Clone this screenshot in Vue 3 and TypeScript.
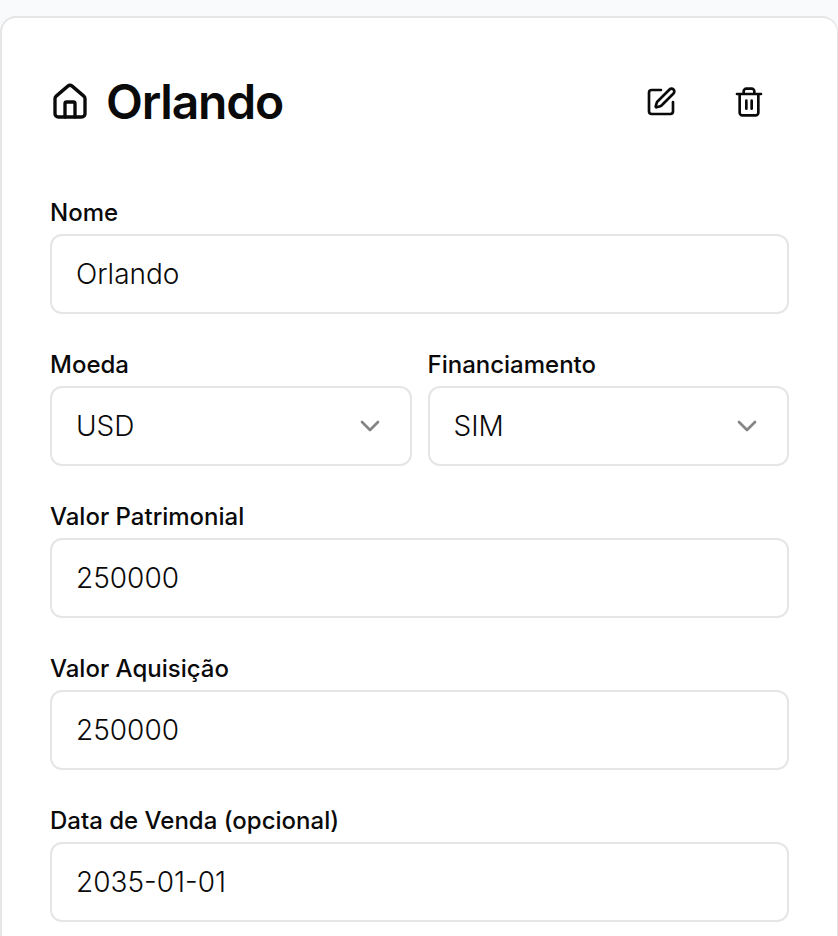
<script setup lang="ts">
import { reactive } from 'vue'

const asset = reactive({
  name: 'Orlando',
  currency: 'USD',
  financing: 'SIM',
  value: '250000',
  cost: '250000',
  saleDate: '2035-01-01',
})
</script>

<template>
  <main class="page">
    <section class="card">
      <header class="head">
        <h1 class="title">
          <svg class="house" viewBox="0 0 24 24" aria-hidden="true">
            <path d="M15 21v-8a1 1 0 0 0-1-1h-4a1 1 0 0 0-1 1v8" />
            <path d="M3 10a2 2 0 0 1 .709-1.528l7-5.999a2 2 0 0 1 2.582 0l7 5.999A2 2 0 0 1 21 10v9a2 2 0 0 1-2 2H5a2 2 0 0 1-2-2z" />
          </svg>
          <span>{{ asset.name }}</span>
        </h1>
        <div class="actions">
          <button type="button" class="icon-button" aria-label="Editar">
            <svg viewBox="0 0 24 24" aria-hidden="true">
              <path d="M12 3H5a2 2 0 0 0-2 2v14a2 2 0 0 0 2 2h14a2 2 0 0 0 2-2v-7" />
              <path d="M18.375 2.625a1 1 0 0 1 3 3l-9.013 9.014a2 2 0 0 1-.853.505l-2.873.84a.5.5 0 0 1-.62-.62l.84-2.873a2 2 0 0 1 .506-.852z" />
            </svg>
          </button>
          <button type="button" class="icon-button" aria-label="Excluir">
            <svg viewBox="0 0 24 24" aria-hidden="true">
              <path d="M3 6h18M19 6v14c0 1-1 2-2 2H7c-1 0-2-1-2-2V6M8 6V4c0-1 1-2 2-2h4c1 0 2 1 2 2v2M10 11v6M14 11v6" />
            </svg>
          </button>
        </div>
      </header>

      <form class="form" @submit.prevent>
        <div class="field">
          <label for="name">Nome</label>
          <input id="name" v-model="asset.name" class="control" type="text" />
        </div>
        <div class="row">
          <div class="field">
            <label for="currency">Moeda</label>
            <div class="select">
              <select id="currency" v-model="asset.currency" class="control">
                <option>USD</option>
                <option>BRL</option>
              </select>
              <svg class="chevron" viewBox="0 0 24 24" aria-hidden="true"><path d="m6 9 6 6 6-6" /></svg>
            </div>
          </div>
          <div class="field">
            <label for="financing">Financiamento</label>
            <div class="select">
              <select id="financing" v-model="asset.financing" class="control">
                <option>SIM</option>
                <option>NÃO</option>
              </select>
              <svg class="chevron" viewBox="0 0 24 24" aria-hidden="true"><path d="m6 9 6 6 6-6" /></svg>
            </div>
          </div>
        </div>
        <div class="field">
          <label for="value">Valor Patrimonial</label>
          <input id="value" v-model="asset.value" class="control" type="text" inputmode="numeric" />
        </div>
        <div class="field">
          <label for="cost">Valor Aquisição</label>
          <input id="cost" v-model="asset.cost" class="control" type="text" inputmode="numeric" />
        </div>
        <div class="field">
          <label for="sale-date">Data de Venda (opcional)</label>
          <input id="sale-date" v-model="asset.saleDate" class="control" type="text" />
        </div>
      </form>
    </section>
  </main>
</template>

<style>
body {
  background: #f9fafb;
}
</style>

<style scoped>
.page {
  padding-top: 16px;
  color: #0a0a0a;
  font-family: Inter, "Liberation Sans", sans-serif;
}

.card {
  box-sizing: border-box;
  padding: 48px 48px 16px;
  border: 2px solid #e5e5e5;
  border-right-width: 1px;
  border-bottom: 0;
  border-radius: 16px 16px 0 0;
  background: #fff;
}

svg {
  fill: none;
  stroke: currentColor;
  stroke-width: 2;
  stroke-linecap: round;
  stroke-linejoin: round;
}

.head {
  display: flex;
  align-items: center;
  justify-content: space-between;
  height: 72px;
  margin-bottom: 56px;
}

.title {
  display: flex;
  align-items: center;
  gap: 16px;
  margin: 0;
  font-size: 48px;
  line-height: 64px;
  font-weight: 600;
  letter-spacing: -0.025em;
}

.house {
  width: 40px;
  height: 40px;
}

.actions {
  display: flex;
  gap: 8px;
}

.icon-button {
  display: grid;
  place-items: center;
  width: 80px;
  height: 72px;
  padding: 0;
  border: 0;
  border-radius: 12px;
  background: transparent;
  color: inherit;
}

.icon-button svg {
  width: 32px;
  height: 32px;
}

.form {
  display: grid;
  gap: 32px;
}

.row {
  display: grid;
  grid-template-columns: 1fr 1fr;
  gap: 16px;
}

.field {
  display: grid;
  gap: 2px;
  min-width: 0;
}

label {
  font-size: 24px;
  line-height: 38px;
  font-weight: 500;
}

.control {
  box-sizing: border-box;
  display: block;
  width: 100%;
  height: 80px;
  padding: 0 24px;
  border: 2px solid #e5e5e5;
  border-radius: 12px;
  background: #fff;
  color: inherit;
  font-family: inherit;
  font-size: 28px;
  font-weight: 300;
  appearance: none;
}

.select {
  position: relative;
}

.chevron {
  position: absolute;
  top: 24px;
  right: 26px;
  width: 32px;
  height: 32px;
  color: #858585;
  pointer-events: none;
}
</style>
